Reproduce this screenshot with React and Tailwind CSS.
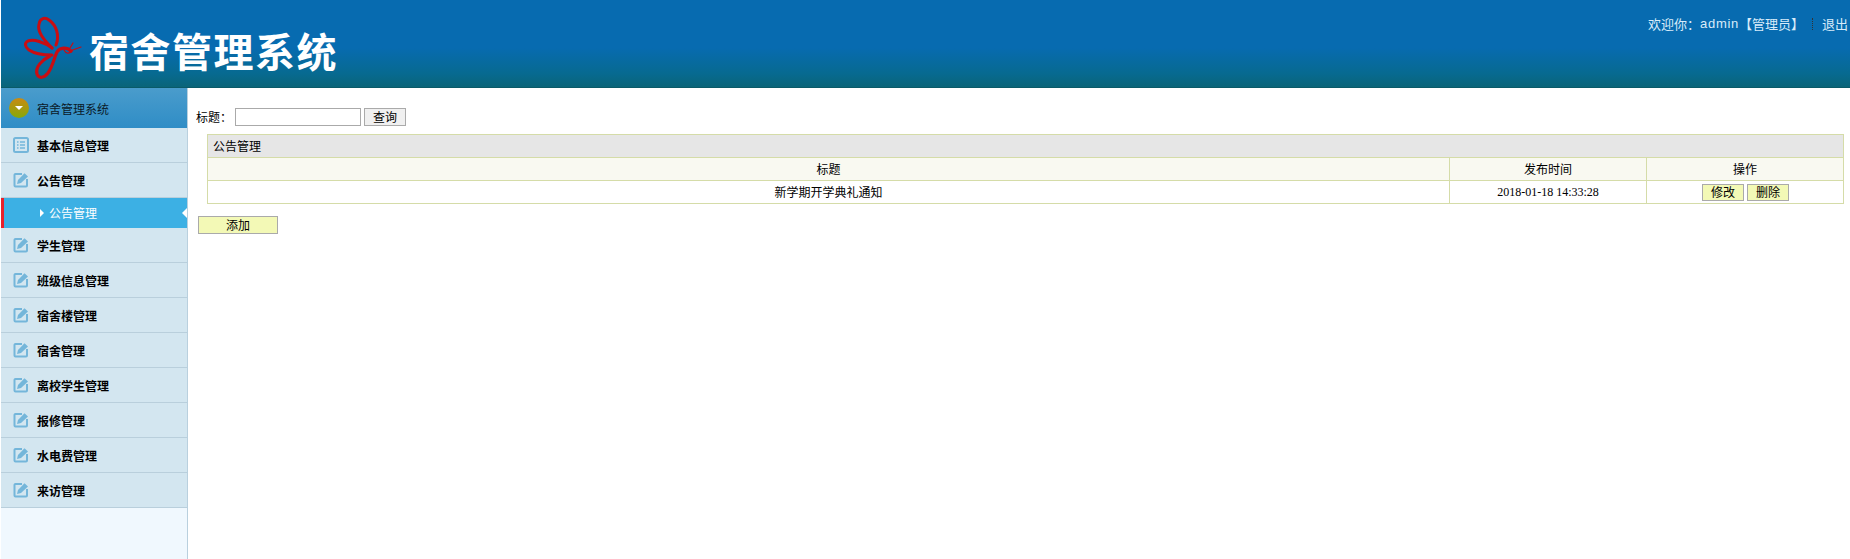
import React from 'react';

const cjk = 'font-["SimSun","Noto_Sans_CJK_SC",sans-serif]';

const menus = ['公告管理', '学生管理', '班级信息管理', '宿舍楼管理', '宿舍管理', '离校学生管理', '报修管理', '水电费管理', '来访管理'];

const EditIcon = () => (
  <svg width="16" height="16" viewBox="0 0 16 16" className="shrink-0">
    <path d="M9 2H2.5a1 1 0 0 0-1 1v10.5a1 1 0 0 0 1 1H13a1 1 0 0 0 1-1V7" fill="none" stroke="#74b6da" strokeWidth="2" />
    <path d="M4 12l1-4L11.5 1.2 15 4.5 8 11z" fill="#74b6da" />
  </svg>
);

const ListIcon = () => (
  <svg width="16" height="16" viewBox="0 0 16 16" className="shrink-0">
    <rect x="1" y="1" width="14" height="14" rx="1.5" fill="#d3e6f0" stroke="#74b6da" strokeWidth="2" />
    <path d="M4 5h1.5M7 5h5M4 8h1.5M7 8h5M4 11h1.5M7 11h5" stroke="#74b6da" strokeWidth="1.5" />
  </svg>
);

const Logo = () => (
  <svg width="65" height="67" viewBox="20 15 65 67" className="shrink-0" fill="none" stroke="#c90d12" strokeLinecap="round">
    <path d="M52 48C44 40 37 32 39 24C40 18 45 17 49 20C56 25 60 35 56 45" strokeWidth="3" />
    <path d="M52 48C44 42 34 39 28 41C24 43 25 47 29 50C35 54 44 55 52 55" strokeWidth="3" />
    <path d="M71 51C67 47 60 47 57 52C54 58 53 66 48 73C44 78 39 79 37 74C35 67 42 60 50 56" strokeWidth="3.2" />
    <path d="M64 50C66 54 69 54 72 51M70 48L73 43M70 51L81 47" strokeWidth="1.2" />
  </svg>
);

const MenuRow = ({ label, icon }) => (
  <div className="h-[35px] flex items-center pl-3 gap-2 bg-[#d3e6f0] border-b border-[#b9cfdc] text-xs font-bold text-black">
    {icon}
    <span className="pt-px">{label}</span>
  </div>
);

const Sidebar = () => (
  <aside className="w-[187px] shrink-0 bg-[#f0f8fe] border-r border-[#b9d0de]">
    <div className="h-10 flex items-center pl-2 gap-2 bg-[linear-gradient(#4a9ccc,#2f8dc6)] text-xs text-[#0a1a28]">
      <span className="w-5 h-5 rounded-full bg-[linear-gradient(#c98a14,#86a90a)] flex items-center justify-center">
        <span className="w-0 h-0 border-x-[4px] border-x-transparent border-t-[4px] border-t-white" />
      </span>
      <span className="pt-px">宿舍管理系统</span>
    </div>
    <MenuRow label="基本信息管理" icon={<ListIcon />} />
    <MenuRow label={menus[0]} icon={<EditIcon />} />
    <div className="relative h-[30px] flex items-center pl-[36px] bg-[#3cb0e4] border-l-[3px] border-[#e8202a] text-xs text-white">
      <span className="w-0 h-0 mr-[5px] border-y-[4px] border-y-transparent border-l-[4px] border-l-white" />
      <span>公告管理</span>
      <span className="absolute right-0 top-[10px] w-0 h-0 border-y-[5px] border-y-transparent border-r-[5px] border-r-white" />
    </div>
    {menus.slice(1).map((m) => (
      <MenuRow key={m} label={m} icon={<EditIcon />} />
    ))}
  </aside>
);

const SmallBtn = ({ children }) => (
  <button className="w-[42px] h-[17px] leading-none bg-[#f3f9b6] border border-[#aaa] text-xs text-black">{children}</button>
);

const App = () => (
  <div className={`min-h-screen flex flex-col pl-px bg-white ${cjk}`}>
    <header className="h-[88px] shrink-0 flex justify-between bg-[linear-gradient(#076bb0_0%,#076bb0_55%,#076a90_85%,#0a6478_100%)] border-b border-[#0a5a68]">
      <div className="flex items-start pl-[19px] pt-[15px] gap-[4px]">
        <Logo />
        <h1 className="mt-[10px] text-[40px] leading-[50px] font-bold tracking-[1.5px] text-white">宿舍管理系统</h1>
      </div>
      <div className="flex items-center h-4 mt-4 pr-[2px] text-[13px] text-[#d8ecfa]">
        <span>欢迎你：</span>
        <span className="font-['Liberation_Sans',sans-serif] tracking-[0.7px]">admin</span>
        <span>【管理员】</span>
        <span className="h-3 ml-2 mr-[9px] border-l border-dotted border-[#333]" />
        <span>退出</span>
      </div>
    </header>

    <div className="flex flex-1">
      <Sidebar />
      <main className="flex-1 pt-5 pl-2 pr-[5px] text-xs text-black">
        <div className="flex items-center">
          <span className="w-[39px]">标题：</span>
          <input className="w-[126px] h-[18px] bg-white border border-[#aaa]" />
          <button className="w-[42px] h-[18px] ml-[3px] leading-none bg-[#f0f0f0] border border-[#aaa]">查询</button>
        </div>

        <table className="ml-[11px] mt-2 w-[1637px] table-fixed border-collapse text-center">
          <colgroup>
            <col />
            <col className="w-[197px]" />
            <col className="w-[197px]" />
          </colgroup>
          <tbody>
            <tr className="h-[23px] bg-[#e6e6e6]">
              <td colSpan={3} className="border border-[#d5dca8] pl-[5px] text-left">公告管理</td>
            </tr>
            <tr className="h-[23px] bg-[#f9f9f1]">
              <td className="border border-[#d5dca8]">标题</td>
              <td className="border border-[#d5dca8]">发布时间</td>
              <td className="border border-[#d5dca8]">操作</td>
            </tr>
            <tr className="h-[23px] bg-white">
              <td className="border border-[#d5dca8]">新学期开学典礼通知</td>
              <td className="border border-[#d5dca8] font-['Liberation_Serif',serif]">2018-01-18 14:33:28</td>
              <td className="border border-[#d5dca8]">
                <div className="flex justify-center gap-[3px] ml-px">
                  <SmallBtn>修改</SmallBtn>
                  <SmallBtn>删除</SmallBtn>
                </div>
              </td>
            </tr>
          </tbody>
        </table>

        <button className="block w-20 h-[18px] ml-[2px] mt-3 leading-none bg-[#f3f9b6] border border-[#aaa]">添加</button>
      </main>
    </div>
  </div>
);

export default App;
